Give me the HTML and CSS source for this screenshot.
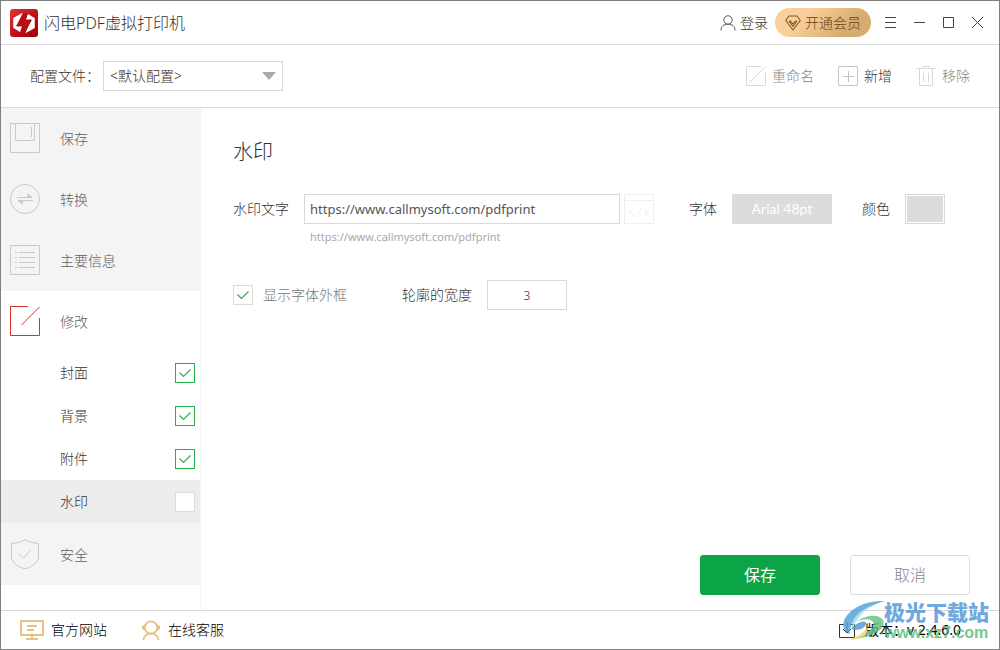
FILE: index.html
```html
<!DOCTYPE html>
<html lang="zh-CN">
<head>
<meta charset="utf-8">
<meta name="viewport" content="width=device-width, initial-scale=1">
<title>闪电PDF虚拟打印机</title>
<link rel="stylesheet" href="styles.css">
</head>
<body>
<div class="window">
  <header class="titlebar">
    <svg class="logo" width="28" height="28" viewBox="0 0 28 28" aria-hidden="true">
      <defs><linearGradient id="red" x1="0" y1="0" x2="1" y2="1"><stop offset="0" stop-color="#e2353b"/><stop offset=".5" stop-color="#c2121a"/><stop offset="1" stop-color="#9d0007"/></linearGradient></defs>
      <rect width="28" height="28" rx="3" fill="url(#red)"/>
      <path d="M12.500 4 3.500 9V19L10 23 12 17.500H6.500ZM15.500 24 24.500 19V9L18 5 16 10.500H21.500Z" fill="#fff"/>
      <path d="M14 3.500 6 17H12.500L10.500 24 13.500 25 22 11H15.500L17.500 4.500Z" fill="#b70d14"/>
      <path d="M12.500 4 3.500 9V19L5.500 17.500ZM15.500 24 24.500 19V9L22.500 10.500Z" fill="#fff"/>
    </svg>
    <h1 class="app-name">闪电PDF虚拟打印机</h1>
    <a class="login" href="#login">
      <svg width="16" height="16" viewBox="0 0 16 16" fill="none" stroke="#555" aria-hidden="true"><circle cx="8" cy="5" r="4.200"/><path d="M1 15.500C1 11 4 9.200 8 9.200S15 11 15 15.500"/></svg>
      登录
    </a>
    <button class="vip" type="button">
      <svg width="16" height="16" viewBox="0 0 16 16" fill="none" stroke="#7d5722" stroke-width="1.100" stroke-linejoin="round" aria-hidden="true"><path d="M4 1H12L15.300 5.500 8 15 .700 5.500ZM4 6 8 11.500 12 6M4 6H5.500L8 9 10.500 6H12"/></svg>
      开通会员
    </button>
    <div class="controls">
      <button type="button" aria-label="菜单"><svg width="13" height="13" viewBox="0 0 13 13"><path d="M1 1.500H12M1 6.500H12M1 11.500H12"/></svg></button>
      <button type="button" aria-label="最小化"><svg width="13" height="13" viewBox="0 0 13 13"><path d="M1 6.500H12"/></svg></button>
      <button type="button" aria-label="最大化"><svg width="13" height="13" viewBox="0 0 13 13"><path d="M1.500 1.500H11.500V11.500H1.500Z"/></svg></button>
      <button type="button" aria-label="关闭"><svg width="13" height="13" viewBox="0 0 13 13"><path d="M1 1 12 12M12 1 1 12"/></svg></button>
    </div>
  </header>

  <div class="toolbar">
    <label for="profile">配置文件：</label>
    <select id="profile" class="profile"><option>&lt;默认配置&gt;</option></select>
    <div class="actions">
      <button class="action muted" type="button">
        <svg width="20" height="20" viewBox="0 0 20 20" fill="none" stroke="#d8d8d8" aria-hidden="true"><path d="M15 .5H.5V19.500H19.500V7M3.500 16.500 19.500.500"/></svg>
        重命名
      </button>
      <button class="action" type="button">
        <svg width="20" height="20" viewBox="0 0 20 20" fill="none" stroke="#c4c4c4" aria-hidden="true"><path d="M.5.500H19.500V19.500H.5ZM5 10.500H16M10.500 5V16"/></svg>
        新增
      </button>
      <button class="action muted" type="button">
        <svg width="20" height="20" viewBox="0 0 20 20" fill="none" stroke="#d8d8d8" aria-hidden="true"><path d="M0 2.500H20M6 .5H14M3.500 2.500V19.500H16.500V2.500M7.500 7V16M12.500 7V16"/></svg>
        移除
      </button>
    </div>
  </div>

  <div class="body">
    <nav class="sidebar">
      <a class="item" href="#save">
        <svg class="icon" viewBox="0 0 30 30" aria-hidden="true"><path d="M.5.500H29.500V29.500H.5ZM5.500.500V17.500H24.500V.500M21.500 4V14"/></svg>
        保存
      </a>
      <a class="item" href="#convert">
        <svg class="icon" viewBox="0 0 30 30" aria-hidden="true"><circle cx="15" cy="15" r="14.500"/><path d="M7 13.500H22M8 16.500H23"/><path class="solid" d="M17 9.500V13H22.500ZM13 20.500V17H7.500Z"/></svg>
        转换
      </a>
      <a class="item" href="#info">
        <svg class="icon" viewBox="0 0 30 30" aria-hidden="true"><path d="M.5.500H29.500V29.500H.5ZM9 7.500H25M9 12.500H25M9 17.500H25M9 22.500H25M5 7.500H7M5 12.500H7M5 17.500H7M5 22.500H7"/></svg>
        主要信息
      </a>
      <a class="item open" href="#edit">
        <svg class="icon" viewBox="0 0 30 30" aria-hidden="true"><path d="M18 .5H.5V29.500H29.500V12M11.500 19 29.500 1"/></svg>
        修改
      </a>
      <div class="subitems">
        <label class="sub">封面<input class="check green" type="checkbox" checked></label>
        <label class="sub">背景<input class="check green" type="checkbox" checked></label>
        <label class="sub">附件<input class="check green" type="checkbox" checked></label>
        <label class="sub current">水印<input class="check" type="checkbox"></label>
      </div>
      <a class="item last" href="#security">
        <svg class="icon" viewBox="0 0 30 30" aria-hidden="true"><path d="M15 .5C12 3.500 6 4 1.500 4.500V18C1.500 23.500 10 29.500 15 29.500S28.500 23.500 28.500 18V4.500C24 4 18 3.500 15 .5ZM9 15 13.500 19 21 10.500"/></svg>
        安全
      </a>
    </nav>

    <main class="content">
      <h2 class="heading">水印</h2>
      <div class="row">
        <label class="text-label" for="mark">水印文字</label>
        <input id="mark" class="box url" type="text" value="https://www.callmysoft.com/pdfprint">
        <button class="code" type="button" aria-label="插入变量" disabled>
          <svg width="30" height="30" viewBox="0 0 30 30" fill="none" stroke="#efefef" aria-hidden="true"><path d="M.5.500H29.500V29.500H.5ZM.5 6.500H29.500M10 15.500 5 18.500 10 21.500M20 15.500 25 18.500 20 21.500M17.500 13.500 12.500 23.500"/></svg>
        </button>
        <label class="font-label" for="font">字体</label>
        <button id="font" class="font" type="button">Arial 48pt</button>
        <label class="color-label" for="color">颜色</label>
        <button id="color" class="color" type="button" aria-label="颜色"></button>
      </div>
      <p class="hint">https://www.callmysoft.com/pdfprint</p>
      <div class="row outline">
        <label class="show"><input class="check small" type="checkbox" checked>显示字体外框</label>
        <label for="width">轮廓的宽度</label>
        <input id="width" class="box number" type="text" value="3">
      </div>
      <div class="buttons">
        <button class="btn primary" type="button">保存</button>
        <button class="btn" type="button">取消</button>
      </div>
    </main>
  </div>

  <footer class="footer">
    <a class="foot" href="#site">
      <svg width="24" height="20" viewBox="0 0 24 20" fill="none" stroke="#e9bf86" stroke-width="2" aria-hidden="true"><path d="M1 1H23V15H1ZM7 6H17M7 10H14M12 15V19M6 19H18"/></svg>
      官方网站
    </a>
    <a class="foot service" href="#service">
      <svg width="20" height="20" viewBox="0 0 20 20" aria-hidden="true"><g fill="none" stroke="#e9bf86" stroke-width="1.800"><circle cx="10" cy="7.500" r="6.200"/><path d="M2.500 20C3 15.500 6 13.600 10 13.600S17 15.500 17.500 20"/></g><path d="M4 4.500 1 6V9L4.500 11ZM16 4.500 19 6V9L15.500 11Z" fill="#e9bf86"/></svg>
      在线客服
    </a>
    <a class="foot version" href="#version">
      <svg width="16" height="16" viewBox="0 0 16 16" fill="none" stroke="#333" aria-hidden="true"><path d="M5 2.500H.5V15.500H15.500V2.500H11M8 0V11"/><path d="M4 7 8 11 12 7"/></svg>
      版本：v 2.4.6.0
    </a>
    <div class="watermark">
      <svg width="46" height="42" viewBox="0 0 46 42" aria-hidden="true">
        <path d="M43 1C24 0 6 9 2 21 0 28 3 32 8 34 6 24 18 8 43 1Z" fill="#4d9dd8"/>
        <path d="M34 4C20 8 9 17 10 29 14 21 20 10 34 4Z" fill="#a4d7ee"/>
        <path d="M14 22C22 15 37 13 41 20 45 28 32 37 12 39 25 34 34 27 31 22 28 18 20 19 14 22Z" fill="#5fc07c"/>
        <path d="M9 29C17 20 25 20 24 24 23 29 15 31 9 29Z" fill="#4b99d3"/>
        <path d="M7 40C15 36 22 33 26 27 27 34 20 39 7 40Z" fill="#e9dc69"/>
      </svg>
      <div class="mark-text"><span class="mark-name">极光下载站</span><span class="mark-url">www.xz7.com</span></div>
    </div>
  </footer>
</div>
</body>
</html>
```
FILE: styles.css
```css
* { box-sizing: border-box; }
body {
  margin: 0;
  background: #fff;
  color: #333;
  font: 300 14px/20px "Noto Sans", "Noto Sans CJK SC", sans-serif;
}
button, input, select { font: inherit; color: inherit; }
button { padding: 0; border: 0; background: none; white-space: nowrap; }
a { color: inherit; text-decoration: none; white-space: nowrap; }
label { white-space: nowrap; }
h1, h2, p { margin: 0; font-weight: 300; }
svg { display: block; flex: none; }

.window {
  display: flex;
  flex-direction: column;
  min-height: 100vh;
  border: 1px solid #808080;
}

.titlebar {
  display: flex;
  align-items: center;
  height: 44px;
  padding: 0 15px 0 9px;
  border-bottom: 1px solid #dcdcdc;
}
.app-name { margin: 0 auto 0 6px; font-size: 16px; line-height: 24px; }
.login { display: flex; align-items: center; gap: 4px; }
.vip {
  display: flex;
  align-items: center;
  justify-content: center;
  gap: 4px;
  width: 96px;
  height: 29px;
  margin-left: 7px;
  border-radius: 15px;
  background: linear-gradient(135deg, #f9d09b 30%, #d6ac70 75%);
  color: #68430f;
}
.controls { display: flex; gap: 16px; margin-left: 13px; }
.controls svg { fill: none; stroke: #444; }

.toolbar {
  display: flex;
  align-items: center;
  height: 63px;
  padding: 0 29px;
  border-bottom: 1px solid #dcdcdc;
}
.profile {
  appearance: none;
  width: 180px;
  height: 30px;
  margin-left: 3px;
  padding: 0 24px 0 6px;
  border: 1px solid #d9d9d9;
  border-radius: 0;
  background: url("data:image/svg+xml,%3Csvg xmlns='http://www.w3.org/2000/svg' width='14' height='8'%3E%3Cpath d='M0 0H14L7 8Z' fill='%23aaa'/%3E%3C/svg%3E") no-repeat right 6px center;
}
.actions { display: flex; gap: 24px; margin-left: auto; }
.action { display: flex; align-items: center; gap: 6px; }
.muted { color: #888; }

.body { display: flex; flex: 1; }
.sidebar {
  display: flex;
  flex-direction: column;
  flex: none;
  width: 200px;
  border-right: 1px solid #f4f4f4;
}
.item {
  display: flex;
  align-items: center;
  gap: 20px;
  height: 61px;
  padding-left: 9px;
  background: #f4f4f4;
  color: #606060;
}
.icon { width: 30px; height: 30px; margin-bottom: 2px; fill: none; stroke: #c9c9c9; }
.icon .solid { fill: #c9c9c9; stroke: none; }
.open { height: 60px; padding-top: 2px; background: #fff; }
.open .icon { stroke: #d9302c; }
.last { height: 62px; padding-top: 1px; }
.sub {
  display: flex;
  align-items: center;
  justify-content: space-between;
  height: 43px;
  padding: 0 5px 0 59px;
}
.current { background: #ededed; }
.check {
  appearance: none;
  flex: none;
  width: 20px;
  height: 20px;
  margin: 0;
  border: 1px solid #dcdcdc;
  background: #fff center no-repeat;
}
.check:checked {
  background-image: url("data:image/svg+xml,%3Csvg xmlns='http://www.w3.org/2000/svg' width='14' height='10'%3E%3Cpath d='M1.500 4.500 5.500 8.500 12.500 1.500' fill='none' stroke='%232bb04e' stroke-width='1.200'/%3E%3C/svg%3E");
}
.green { border-color: #28ad4b; }

.content {
  display: flex;
  flex-direction: column;
  flex: 1;
  padding: 28px 29px 15px 32px;
}
.heading { font-size: 20px; line-height: 32px; }
.row { display: flex; align-items: center; }
.heading + .row { margin-top: 26px; }
.text-label { margin-right: 15px; }
.box {
  height: 30px;
  padding: 0 5px;
  border: 1px solid #d9d9d9;
  border-radius: 0;
  background: #fff;
}
.url { flex: 0 1 316px; min-width: 0; color: #555; font-size: 13px; font-weight: 400; }
.code { margin-left: 4px; }
.font-label { margin-left: 35px; }
.font {
  width: 100px;
  height: 30px;
  margin-left: 15px;
  background: #dcdcdc;
  color: #fff;
  font-family: Lato, sans-serif;
  font-weight: 400;
}
.color-label { margin-left: 30px; }
.color {
  width: 40px;
  height: 30px;
  margin-left: 15px;
  padding: 1px;
  border: 1px solid #d9d9d9;
  background: #dcdcdc content-box;
}
.hint { margin: 3px 0 0 77px; color: #aaa; font-size: 11px; font-weight: 400; }
.outline { margin-top: 33px; }
.show { display: flex; align-items: center; gap: 10px; margin-right: 55px; color: #777; }
.number { width: 80px; margin-left: 15px; text-align: center; font-size: 12px; }
.buttons { display: flex; justify-content: flex-end; gap: 30px; margin-top: auto; }
.btn {
  width: 120px;
  height: 40px;
  border: 1px solid #dcdcdc;
  border-radius: 3px;
  color: #888;
  font-size: 16px;
}
.primary { border-color: #0ba546; background: #0ba546; color: #fff; font-weight: 400; }

.footer {
  position: relative;
  display: flex;
  align-items: center;
  height: 39px;
  padding: 0 38px 0 19px;
  border-top: 1px solid #d9d9d9;
  color: #000;
}
.foot { display: flex; align-items: center; gap: 7px; }
.service { margin-left: 34px; }
.version { gap: 10px; margin-left: auto; font-weight: 400; }
.watermark {
  position: absolute;
  right: 10px;
  bottom: 7px;
  display: flex;
  align-items: center;
  opacity: 0.8;
  pointer-events: none;
}
.mark-text { display: flex; flex-direction: column; margin-left: -4px; }
.mark-name { color: #4a94d8; font-size: 21px; font-weight: 900; line-height: 24px; }
.mark-url { color: #4fbd75; font: 700 16px/18px "Liberation Sans", sans-serif; }
```
